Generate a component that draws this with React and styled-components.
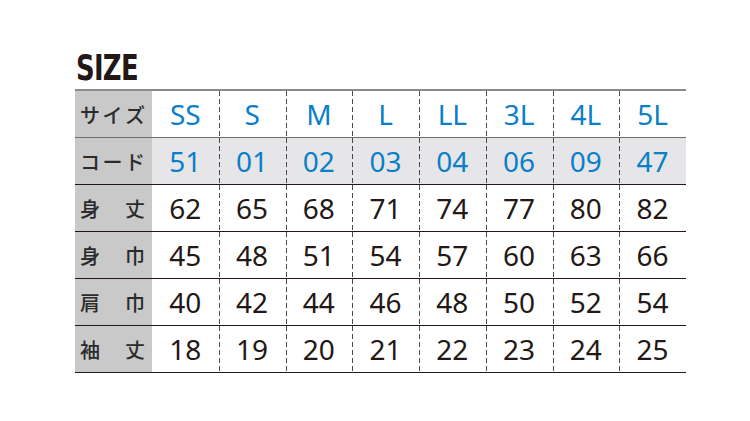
import React from 'react';
import styled, { createGlobalStyle } from 'styled-components';

const GlobalStyle = createGlobalStyle`
  body {
    margin: 0;
    background: #ffffff;
  }
`;

const Page = styled.div`
  width: 750px;
  height: 421px;
  padding: 50px 0 0 75px;
  box-sizing: border-box;
`;

const Title = styled.h1`
  margin: 0 0 0 1px;
  height: 39px;
  font-family: "DejaVu Sans", sans-serif;
  font-weight: 700;
  font-size: 36px;
  line-height: 36px;
  letter-spacing: -1px;
  color: #231815;
  transform: scaleX(0.72);
  transform-origin: left center;
`;

const Table = styled.div`
  width: 611px;
  border-top: 2px solid #8a8a8a;
`;

const Row = styled.div`
  display: grid;
  grid-template-columns: 77px repeat(8, 1fr);
  height: 46px;
  border-bottom: 1px solid #231815;
  &:first-child {
    border-bottom-color: #6e6e6e;
  }
`;

const Label = styled.div`
  display: flex;
  align-items: center;
  justify-content: space-between;
  padding: 0 7px 0 5px;
  background: #c9c9c9;
  font-family: "Noto Sans CJK JP", sans-serif;
  font-weight: 500;
  font-size: 20px;
  color: #2b2b2b;
`;

const Cell = styled.div`
  display: flex;
  align-items: center;
  justify-content: center;
  background: ${(p) => (p.$shaded ? '#e6e6e8' : '#ffffff')};
  color: ${(p) => (p.$blue ? '#0a7fc9' : '#231815')};
  font-family: "Noto Sans", sans-serif;
  font-size: 28px;
  padding-bottom: 1px;
  background-image: ${(p) =>
    p.$first ? 'none' : 'linear-gradient(#4a4a4a 60%, transparent 0)'};
  background-size: 1px 8px;
  background-repeat: repeat-y;
  background-position: left top;
`;

const sizes = ['SS', 'S', 'M', 'L', 'LL', '3L', '4L', '5L'];

const rows = [
  { label: ['サ', 'イ', 'ズ'], values: sizes, blue: true },
  { label: ['コ', 'ー', 'ド'], values: ['51', '01', '02', '03', '04', '06', '09', '47'], blue: true, shaded: true },
  { label: ['身', '丈'], values: ['62', '65', '68', '71', '74', '77', '80', '82'] },
  { label: ['身', '巾'], values: ['45', '48', '51', '54', '57', '60', '63', '66'] },
  { label: ['肩', '巾'], values: ['40', '42', '44', '46', '48', '50', '52', '54'] },
  { label: ['袖', '丈'], values: ['18', '19', '20', '21', '22', '23', '24', '25'] },
];

const App = () => {
  return (
    <>
      <GlobalStyle />
      <Page>
        <Title>SIZE</Title>
        <Table>
          {rows.map((row, i) => (
            <Row key={i}>
              <Label>
                {row.label.map((ch) => (
                  <span key={ch}>{ch}</span>
                ))}
              </Label>
              {row.values.map((v, j) => (
                <Cell key={j} $blue={row.blue} $shaded={row.shaded} $first={j === 0}>
                  {v}
                </Cell>
              ))}
            </Row>
          ))}
        </Table>
      </Page>
    </>
  );
};

export default App;
